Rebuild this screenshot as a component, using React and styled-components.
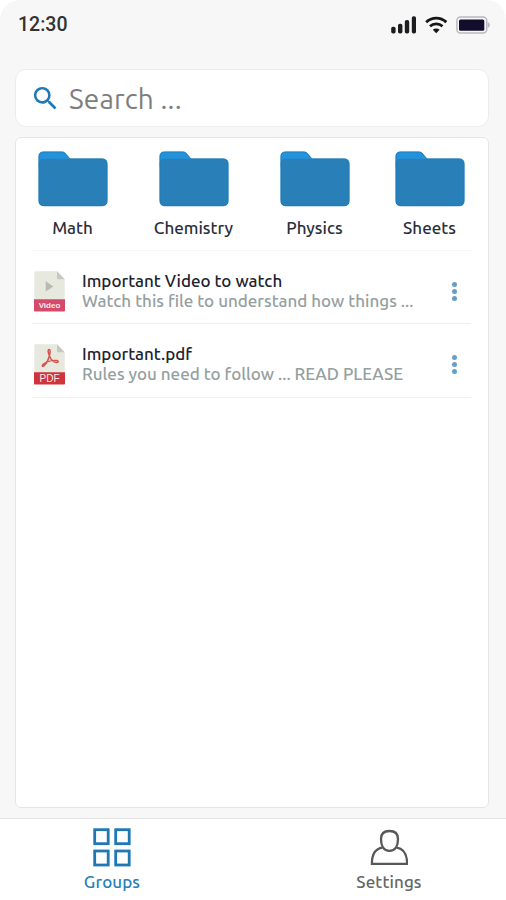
import React from 'react';
import styled, { createGlobalStyle } from 'styled-components';
import { MdSearch } from 'react-icons/md';

const GlobalStyle = createGlobalStyle`
  * {
    box-sizing: border-box;
  }

  body {
    margin: 0;
    background: #fff;
    font-family: Ubuntu, 'Noto Sans', sans-serif;
  }

  svg {
    display: block;
    flex-shrink: 0;
  }
`;

const Screen = styled.div`
  display: flex;
  flex-direction: column;
  width: 506px;
  height: 900px;
  background: #f7f7f7;
  border-radius: 20px 20px 0 0;
  overflow: hidden;
`;

const StatusBar = styled.header`
  display: flex;
  justify-content: space-between;
  align-items: center;
  height: 50px;
  padding: 0 16px 0 18px;
`;

const Clock = styled.span`
  font-family: Roboto, sans-serif;
  font-size: 19.5px;
  font-weight: 500;
  line-height: 20px;
  color: #333;
`;

const StatusIcons = styled.div`
  display: flex;
  align-items: center;
  gap: 9px;
`;

const SearchBox = styled.label`
  display: flex;
  align-items: center;
  height: 58px;
  margin: 19px 17px 0 15px;
  padding-left: 14px;
  background: #fff;
  border: 1px solid #ececec;
  border-radius: 11px;
  color: #1f78b8;
`;

const SearchInput = styled.input`
  flex: 1;
  min-width: 0;
  margin: 1px 0 0 8px;
  padding: 0;
  border: 0;
  outline: 0;
  background: none;
  font: 28px/36px Ubuntu, 'Noto Sans', sans-serif;
  letter-spacing: 0.15px;

  &::placeholder {
    color: #7d7d7d;
    opacity: 1;
  }
`;

const Panel = styled.main`
  height: 671px;
  margin: 10px 17px 0 15px;
  padding: 13px 17px 0 16px;
  background: #fff;
  border: 1px solid #e6e6e6;
  border-radius: 6px;
`;

const Folders = styled.div`
  display: flex;
  justify-content: space-between;
  height: 100px;
  border-bottom: 1px solid #f4f4f4;
`;

const Folder = styled.div`
  display: flex;
  flex-direction: column;
  align-items: center;
  gap: 11px;
  width: 81px;

  &:nth-child(3) {
    margin-right: -6px;
  }

  &:last-child {
    margin-right: 1px;
  }
`;

const Label = styled.span`
  font-size: 17px;
  font-weight: 500;
  line-height: 20px;
  letter-spacing: ${({ $spacing = 0 }) => $spacing}px;
  white-space: nowrap;
  color: ${({ $color = '#2b2f3b' }) => $color};
`;

const FileRow = styled.div`
  display: flex;
  height: 73px;
  padding: 20px 14px 0 2px;
  border-bottom: 1px solid #efefef;

  &:last-child {
    height: 74px;
  }
`;

const FileInfo = styled.div`
  display: flex;
  flex-direction: column;
  flex: 1;
  margin-left: 17px;
`;

const Menu = styled.div`
  display: flex;
  flex-direction: column;
  gap: 2px;
  padding-top: 11px;
`;

const Dot = styled.span`
  width: 5px;
  height: 5px;
  border-radius: 50%;
  background: #649fcb;
`;

const TabBar = styled.nav`
  display: flex;
  gap: 177px;
  height: 82px;
  margin-top: auto;
  padding: 9px 0 0 62px;
  background: #fff;
  border-top: 1px solid #e4e4e4;
`;

const Tab = styled.div`
  display: flex;
  flex-direction: column;
  align-items: center;
  gap: 5px;
  width: 100px;
`;

const folders = ['Math', 'Chemistry', 'Physics', 'Sheets'];

const files = [
  {
    type: 'Video',
    title: 'Important Video to watch',
    text: 'Watch this file to understand how things ...',
  },
  {
    type: 'PDF',
    title: 'Important.pdf',
    text: 'Rules you need to follow ... READ PLEASE',
  },
];

const SignalIcon = () => (
  <svg width='26' height='18' viewBox='0 0 26 18' fill='#1d1d1f'>
    <rect x='1.2' y='10.7' width='4.4' height='6.8' rx='1.8' />
    <rect x='8' y='7.8' width='4.4' height='9.7' rx='1.8' />
    <rect x='14.8' y='4' width='4.4' height='13.5' rx='1.8' />
    <rect x='21.8' y='0.3' width='4.2' height='17.2' rx='1.8' />
  </svg>
);

const WifiIcon = () => (
  <svg width='22' height='18' viewBox='0 0 22 18' fill='none' stroke='#161618'>
    <path d='M1.2 6.2C6.7.7 15.8.7 21.3 6.2' strokeWidth='2.9' />
    <path d='M5 10.3c3.5-3.2 9-3.2 12.5 0' strokeWidth='2.8' />
    <path d='M11.2 17.3 7.8 13.8c1.9-1.6 4.9-1.6 6.8 0z' fill='#161618' stroke='none' />
  </svg>
);

const BatteryIcon = () => (
  <svg width='34' height='18' viewBox='0 0 34 18'>
    <rect x='0.9' y='0.9' width='29.8' height='16.2' rx='3.5' fill='#f7f7f7' stroke='#bbb9bf' strokeWidth='1.5' />
    <rect x='3' y='3.4' width='25.3' height='11.4' rx='1.5' fill='#130d2c' />
    <path d='M31.7 6v6c1.3-.5 2.1-1.6 2.1-3s-.8-2.5-2.1-3z' fill='#bbb9bf' />
  </svg>
);

const FolderIcon = () => (
  <svg width='70' height='56' viewBox='0 0 70 56'>
    <path d='M.7 16V5.5Q.7.7 5.5.7H24q2 0 3.3 1.4L33 9v8z' fill='#2492da' />
    <path
      d='M.7 12.5Q.7 7.7 5.5 7.7H64q5.3 0 5.3 5.3v36.7q0 5.3-5.3 5.3H6Q.7 55 .7 49.7z'
      fill='#2980b9'
    />
    <path
      d='M.9 12V5.5Q.9.9 5.5.9H24q2 0 3.2 1.4l4.7 5.5H64q5.1 0 5.1 5.1v36.8q0 5.1-5.1 5.1H6Q.9 54.8.9 49.7z'
      fill='none'
      stroke='#1978b5'
      strokeWidth='0.8'
    />
  </svg>
);

const FileIcon = ({ type }) => {
  const isPdf = type === 'PDF';
  return (
    <svg width='31' height='41' viewBox='0 0 31 41'>
      <path d='M1.5.3H23l7.7 8v28H.3V1.5Q.3.3 1.5.3z' fill='#e7e8de' />
      <path d='M23 .3V7q0 1.3 1.3 1.3h6.4z' fill='#c7c9c1' />
      {isPdf ? (
        <path
          d='M15.2 5.5c-2 .1-.7 4.2.6 7.2 1.6 3.6 4.2 5.6 7 5.8 1.8.1 1.8-1.8 0-2-4-.5-10 1-13.4 3.7-2.1 1.7-.9 3 .7 1.5 2.3-2.2 4.8-7.4 5.7-11.7.5-2.8.4-4.5-.6-4.5z'
          fill='none'
          stroke='#d45450'
          strokeWidth='1.5'
        />
      ) : (
        <path d='M11.7 10.3v10.2l7.7-5.1z' fill='#b9bbb2' />
      )}
      <path d='M0 28.3h31v11.5q0 .8-.8.8H.8q-.8 0-.8-.8z' fill={isPdf ? '#cf343c' : '#d54a6b'} />
      <text
        x='15.5'
        y={isPdf ? 38.2 : 37.4}
        textAnchor='middle'
        fill='#fbe9e9'
        fontFamily='Liberation Sans, sans-serif'
        fontSize={isPdf ? 10 : 8}
        fontWeight={isPdf ? 400 : 700}
      >
        {type}
      </text>
    </svg>
  );
};

const GroupsIcon = () => (
  <svg width='38' height='39' viewBox='0 0 38 39' fill='none' stroke='#1f78b4' strokeWidth='2.8'>
    <rect x='1.7' y='1.7' width='13.5' height='14' />
    <rect x='22.7' y='1.7' width='13.5' height='14' />
    <rect x='1.7' y='23' width='13.5' height='14' />
    <rect x='22.7' y='23' width='13.5' height='14' />
  </svg>
);

const PersonIcon = () => (
  <svg width='38' height='39' viewBox='0 0 38 39' fill='none' stroke='#585858' strokeWidth='2.3'>
    <path d='M11 11C11 5.5 14 3 19.5 3S28 5.5 28 11c0 7-2.8 11.9-8.5 11.9S11 18 11 11z' />
    <path d='M12.5 19.6C5.4 20.5 1.9 26 1.9 35.8h35.2c0-9.8-3.5-15.3-10.6-16.2' />
  </svg>
);

const App = () => (
  <>
    <GlobalStyle />
    <Screen>
      <StatusBar>
        <Clock>12:30</Clock>
        <StatusIcons>
          <SignalIcon />
          <WifiIcon />
          <BatteryIcon />
        </StatusIcons>
      </StatusBar>
      <SearchBox>
        <MdSearch size={31} />
        <SearchInput placeholder='Search ...' />
      </SearchBox>
      <Panel>
        <Folders>
          {folders.map(name => (
            <Folder key={name}>
              <FolderIcon />
              <Label>{name}</Label>
            </Folder>
          ))}
        </Folders>
        {files.map(({ type, title, text }) => (
          <FileRow key={title}>
            <FileIcon type={type} />
            <FileInfo>
              <Label $color='#20222e'>{title}</Label>
              <Label $color='#94a0a0'>{text}</Label>
            </FileInfo>
            <Menu>
              <Dot />
              <Dot />
              <Dot />
            </Menu>
          </FileRow>
        ))}
      </Panel>
      <TabBar>
        <Tab>
          <GroupsIcon />
          <Label $spacing={0.1} $color='#2a7fb8'>
            Groups
          </Label>
        </Tab>
        <Tab>
          <PersonIcon />
          <Label $spacing={0.1} $color='#666'>
            Settings
          </Label>
        </Tab>
      </TabBar>
    </Screen>
  </>
);

export default App;
